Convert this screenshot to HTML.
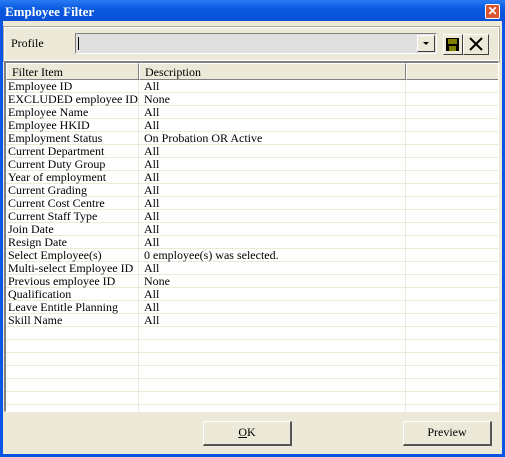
<!DOCTYPE html>
<html><head><style>
*{margin:0;padding:0;box-sizing:border-box}
body{width:505px;height:457px;overflow:hidden;background:#0A54E6;font-family:"Liberation Serif",serif;font-size:12px;position:relative}
.win{position:absolute;left:3px;top:21px;width:499px;height:433px;background:#ECE9D8}
.title{position:absolute;left:0;top:0;width:505px;height:21px;background:linear-gradient(#2A7BF4,#0A5BE0 40%,#0850D8);color:#fff;font-weight:bold;font-size:13px;padding:4px 0 0 5px}
.close{position:absolute;left:485px;top:4px;width:15px;height:15px;background:#D9542F;border:1px solid #fff;border-radius:2px;color:#fff;font:bold 12px/12px "Liberation Sans",sans-serif;text-align:center}
.abs{position:absolute}
.grid{position:absolute;left:4px;top:61px;width:495px;height:351px;border-left:2px solid #808080;border-top:2px solid #808080;border-right:1px solid #fff;border-bottom:1px solid #fff;background:#fff;overflow:hidden}
.hdr{position:absolute;top:0;height:17px;background:#ECE9D8;border-right:1px solid #808080;border-bottom:1px solid #808080;border-top:1px solid #fff;border-left:1px solid #fff;padding:1px 0 0 5px;line-height:14px}
.row{position:absolute;left:0;height:13px;width:495px;border-bottom:1px solid #ECE9D8;line-height:12px}
.row span{position:absolute;top:0}
.vl{position:absolute;top:17px;bottom:0;width:1px;background:#ECE9D8}
.btn{position:absolute;width:89px;height:25px;background:#ECE9D8;border-top:1px solid #fff;border-left:1px solid #fff;border-right:2px solid #555;border-bottom:2px solid #555;text-align:center;line-height:21px}
</style></head><body>
<div class="title">Employee Filter</div>
<div class="close">✕</div>
<div class="win"></div>
<div class="abs" style="left:4px;top:27px;width:495px;height:34px;border:1px solid #fff;outline:1px solid #aca899"></div>
<div class="abs" style="left:11px;top:36px">Profile</div>
<div class="abs" style="left:75px;top:33px;width:362px;height:21px;background:#E0E0E0;border-top:1px solid #808080;border-left:1px solid #808080;border-right:1px solid #fff;border-bottom:1px solid #fff"></div>
<div class="abs" style="left:78px;top:37px;width:1px;height:13px;background:#000"></div>
<div class="abs" style="left:417px;top:35px;width:18px;height:17px;background:#ECE9D8;border-top:1px solid #fff;border-left:1px solid #fff;border-right:1px solid #404040;border-bottom:1px solid #404040"><div style="margin:6px 0 0 5px;width:0;height:0;border-left:3px solid transparent;border-right:3px solid transparent;border-top:3px solid #000"></div></div>
<div class="abs" style="left:443px;top:34px;width:20px;height:21px;border-top:1px solid #fff;border-left:1px solid #fff;border-right:1px solid #404040;border-bottom:1px solid #404040">
<svg width="18" height="19"><rect x="2" y="3" width="13" height="13" fill="#000"/><rect x="4" y="4" width="9" height="5" fill="#808000"/><rect x="5" y="11" width="7" height="5" fill="#808000"/></svg></div>
<div class="abs" style="left:463px;top:34px;width:26px;height:21px;border-top:1px solid #fff;border-left:1px solid #fff;border-right:1px solid #404040;border-bottom:1px solid #404040">
<svg width="24" height="19"><path d="M6 3L18 15M18 3L6 15" stroke="#000" stroke-width="2"/></svg></div>
<div class="grid">
<div class="hdr" style="left:0;width:133px">Filter Item</div>
<div class="hdr" style="left:133px;width:267px">Description</div>
<div class="hdr" style="left:400px;width:93px"></div>
<div class="vl" style="left:132px"></div>
<div class="vl" style="left:399px"></div>
<div id="rows"></div>
</div>
<script>
var d=[["Employee ID","All"],["EXCLUDED employee ID","None"],["Employee Name","All"],["Employee HKID","All"],["Employment Status","On Probation OR Active"],["Current Department","All"],["Current Duty Group","All"],["Year of employment","All"],["Current Grading","All"],["Current Cost Centre","All"],["Current Staff Type","All"],["Join Date","All"],["Resign Date","All"],["Select Employee(s)","0 employee(s) was selected."],["Multi-select Employee ID","All"],["Previous employee ID","None"],["Qualification","All"],["Leave Entitle Planning","All"],["Skill Name","All"]];
var h="";for(var i=0;i<26;i++){var r=d[i]||["",""];h+='<div class="row" style="top:'+(17+i*13)+'px"><span style="left:2px">'+r[0]+'</span><span style="left:138px">'+r[1]+'</span></div>';}
document.getElementById("rows").innerHTML=h;
</script>
<div class="btn" style="left:203px;top:421px"><u>O</u>K</div>
<div class="btn" style="left:403px;top:421px">Preview</div>
</body></html>
